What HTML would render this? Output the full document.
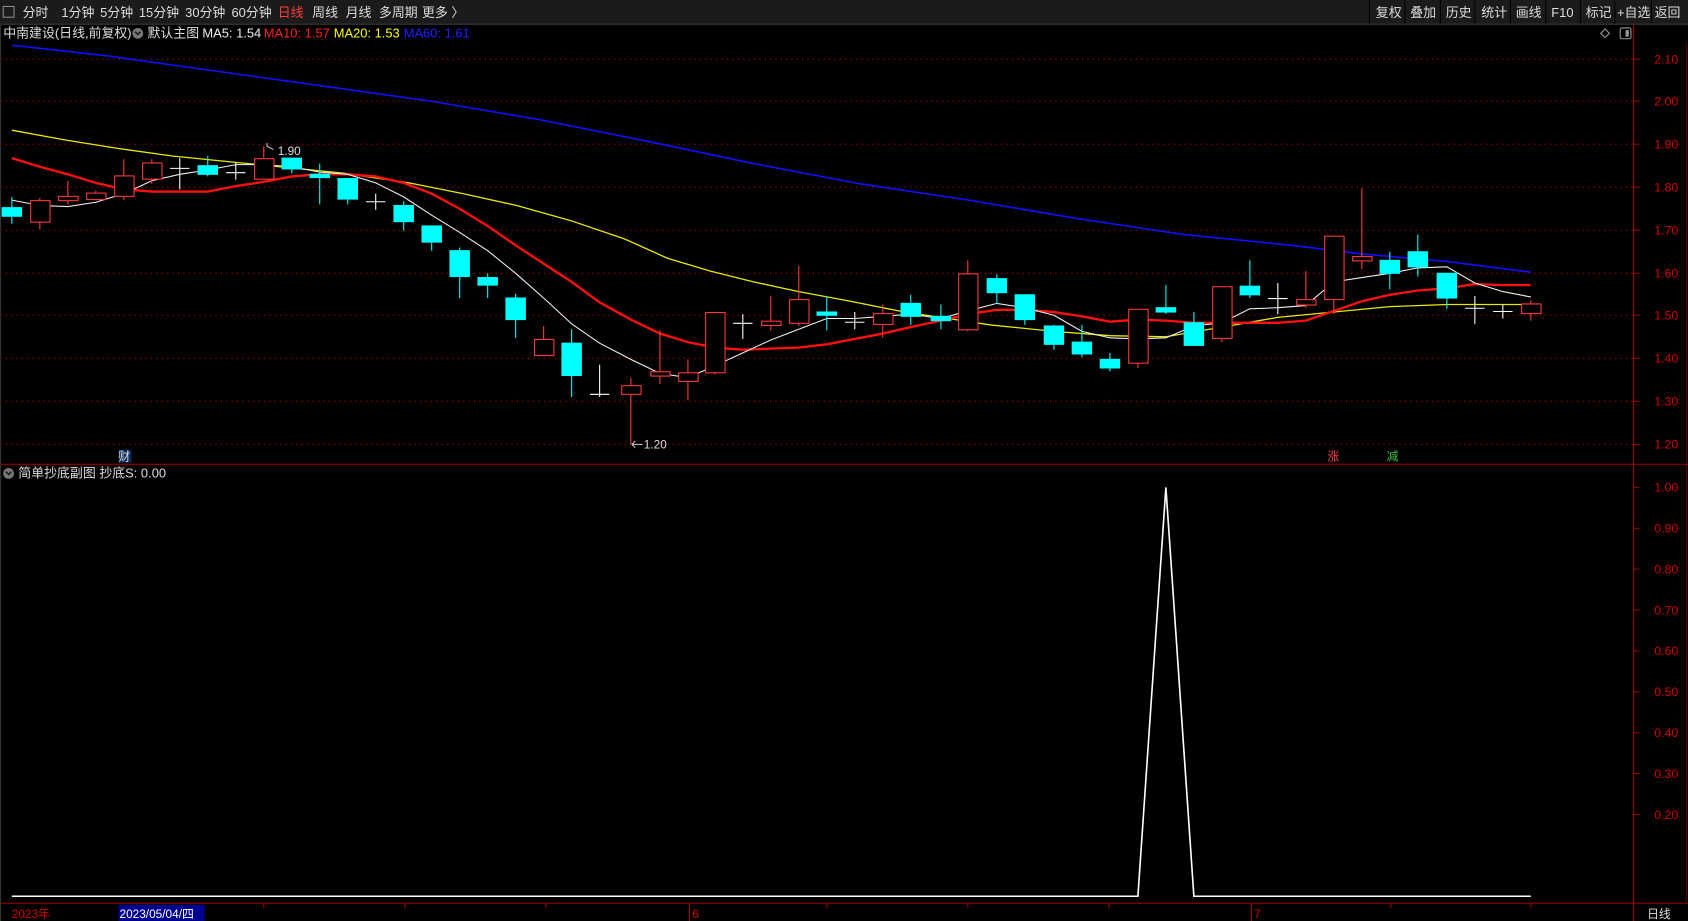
<!DOCTYPE html>
<html><head><meta charset="utf-8"><style>
html,body{margin:0;padding:0;background:#000;width:1688px;height:921px;overflow:hidden}
svg{display:block}
text{font-family:"Liberation Sans","Noto Sans CJK SC",sans-serif}
</style></head><body>
<svg width="1688" height="921" viewBox="0 0 1568 856" preserveAspectRatio="none" xmlns="http://www.w3.org/2000/svg">
<rect width="1568" height="856" fill="#000"/>
<!-- toolbar -->
<rect x="0" y="0" width="1568" height="22" fill="#1b1b1c"/>
<line x1="0" y1="22.5" x2="1568" y2="22.5" stroke="#3a3a3a"/>
<rect x="3" y="6" width="10" height="10" fill="none" stroke="#888"/>
<g font-size="12" fill="#ddd">
<text x="21" y="16">分时</text><text x="57" y="16">1分钟</text><text x="93" y="16">5分钟</text><text x="129" y="16">15分钟</text><text x="172" y="16">30分钟</text><text x="215" y="16">60分钟</text>
<text x="258" y="16" fill="#ff3b3b">日线</text><text x="290" y="16">周线</text><text x="321" y="16">月线</text><text x="352" y="16">多周期</text><text x="392" y="16">更多 〉</text>
<text x="1278" y="16">复权</text><text x="1310" y="16">叠加</text><text x="1343" y="16">历史</text><text x="1376" y="16">统计</text><text x="1408" y="16">画线</text><text x="1441" y="16">F10</text><text x="1473" y="16">标记</text><text x="1502" y="16">+自选</text><text x="1537" y="16">返回</text>
</g>
<g stroke="#000" stroke-width="1">
<line x1="1272" y1="0" x2="1272" y2="22"/><line x1="1305" y1="0" x2="1305" y2="22"/><line x1="1338" y1="0" x2="1338" y2="22"/><line x1="1370" y1="0" x2="1370" y2="22"/><line x1="1403" y1="0" x2="1403" y2="22"/><line x1="1436" y1="0" x2="1436" y2="22"/><line x1="1468" y1="0" x2="1468" y2="22"/><line x1="1500" y1="0" x2="1500" y2="22"/><line x1="1534" y1="0" x2="1534" y2="22"/>
</g>
<!-- info line -->
<g font-size="12">
<text x="3" y="35" fill="#ddd">中南建设(日线,前复权)</text>
<circle cx="128" cy="31" r="5" fill="#777"/><path d="M125.5 29.5 L128 32 L130.5 29.5" stroke="#111" fill="none" stroke-width="1.3"/>
<text x="137" y="35" fill="#ddd">默认主图</text>
<text x="188" y="35" fill="#eee">MA5: 1.54</text>
<text x="245" y="35" fill="#ff2020">MA10: 1.57</text>
<text x="310" y="35" fill="#ffff00">MA20: 1.53</text>
<text x="375" y="35" fill="#2020ff">MA60: 1.61</text>
</g>
<path d="M1491 27 L1495 31 L1491 35 L1487 31 Z" fill="none" stroke="#999"/>
<rect x="1505" y="26" width="10" height="10" rx="1.5" fill="none" stroke="#999"/><rect x="1510" y="28" width="3" height="6" fill="#999"/>
<!-- axes -->
<line x1="1517.5" y1="23" x2="1517.5" y2="856" stroke="#a00000"/>
<line x1="1566.5" y1="40" x2="1566.5" y2="838" stroke="#5a0000"/>
<line x1="0" y1="431.5" x2="1568" y2="431.5" stroke="#a00000"/>
<line x1="0" y1="839.5" x2="1568" y2="839.5" stroke="#a00000"/>
<line x1="0.5" y1="23" x2="0.5" y2="856" stroke="#333"/>
<g stroke="#8a0000" stroke-dasharray="1.5 3.5">
<line x1="0" y1="55" x2="1517" y2="55"/><line x1="0" y1="94" x2="1517" y2="94"/><line x1="0" y1="134" x2="1517" y2="134"/><line x1="0" y1="174" x2="1517" y2="174"/><line x1="0" y1="214" x2="1517" y2="214"/><line x1="0" y1="254" x2="1517" y2="254"/><line x1="0" y1="293" x2="1517" y2="293"/><line x1="0" y1="333" x2="1517" y2="333"/><line x1="0" y1="373" x2="1517" y2="373"/><line x1="0" y1="413" x2="1517" y2="413"/>
</g>
<g stroke="#a00000">
<line x1="1517" y1="55" x2="1523" y2="55"/><line x1="1517" y1="94" x2="1523" y2="94"/><line x1="1517" y1="134" x2="1523" y2="134"/><line x1="1517" y1="174" x2="1523" y2="174"/><line x1="1517" y1="214" x2="1523" y2="214"/><line x1="1517" y1="254" x2="1523" y2="254"/><line x1="1517" y1="293" x2="1523" y2="293"/><line x1="1517" y1="333" x2="1523" y2="333"/><line x1="1517" y1="373" x2="1523" y2="373"/><line x1="1517" y1="413" x2="1523" y2="413"/>
<line x1="1517" y1="453" x2="1523" y2="453"/><line x1="1517" y1="491" x2="1523" y2="491"/><line x1="1517" y1="529" x2="1523" y2="529"/><line x1="1517" y1="567" x2="1523" y2="567"/><line x1="1517" y1="605" x2="1523" y2="605"/><line x1="1517" y1="643" x2="1523" y2="643"/><line x1="1517" y1="681" x2="1523" y2="681"/><line x1="1517" y1="719" x2="1523" y2="719"/><line x1="1517" y1="757" x2="1523" y2="757"/>
</g>
<g font-size="11.5" fill="#d00000" text-anchor="end">
<text x="1559" y="59">2.10</text><text x="1559" y="98">2.00</text><text x="1559" y="138">1.90</text><text x="1559" y="178">1.80</text><text x="1559" y="218">1.70</text><text x="1559" y="258">1.60</text><text x="1559" y="297">1.50</text><text x="1559" y="337">1.40</text><text x="1559" y="377">1.30</text><text x="1559" y="417">1.20</text>
<text x="1559" y="457">1.00</text><text x="1559" y="495">0.90</text><text x="1559" y="533">0.80</text><text x="1559" y="571">0.70</text><text x="1559" y="609">0.60</text><text x="1559" y="647">0.50</text><text x="1559" y="685">0.40</text><text x="1559" y="723">0.30</text><text x="1559" y="761">0.20</text>
</g>
<!-- MA lines -->
<polyline fill="none" stroke="#1010ff" stroke-width="1.5" points="11,42 100,52 200,66 300,80 400,94 500,111 600,131 700,152 800,171 900,186 1000,203 1100,218 1200,228 1265,236 1344,243 1422,253"/>
<polyline fill="none" stroke="#e8e800" stroke-width="1.2" points="11,121 60,130 110,138 160,145 220,151 270,156 320,161 380,170 430,180 480,191 530,205 580,222 620,240 660,252 700,262 742,271 790,280 840,290 874,295 920,302 979,308 1031,312 1083,313 1135,304 1187,295 1239,290 1291,285 1344,283 1422,283"/>
<polyline fill="none" stroke="#ff1010" stroke-width="2.2" points="11,147 37,155 63,162 89,170 115,176 141,178 167,178 193,178 219,173 245,169 271,164 297,162 323,162 349,164 375,170 401,180 427,194 453,210 479,228 505,245 531,262 557,281 586,297 613,310 639,318 664,323 690,325 716,324 742,323 768,320 794,315 820,310 846,304 874,298 899,292 926,288 952,288 979,290 1005,294 1031,299 1057,297 1083,298 1109,300 1135,300 1161,300 1187,300 1213,298 1239,289 1265,280 1291,274 1317,270 1344,268 1370,264 1396,265 1422,265"/>
<polyline fill="none" stroke="#f0f0f0" stroke-width="1" points="11,186 37,191 63,192 89,188 115,180 141,168 167,162 193,158 219,153 245,153 271,155 297,160 323,162 349,170 375,183 401,200 427,216 453,233 479,254 505,277 531,301 557,319 586,334 613,347 639,351 664,340 690,328 716,316 742,306 768,296 794,296 820,294 846,292 874,296 899,289 926,282 952,286 979,293 1005,308 1031,314 1057,315 1083,314 1109,303 1135,300 1161,287 1187,286 1213,284 1239,262 1265,258 1291,254 1317,249 1344,248 1370,263 1396,271 1422,276"/>
<!-- candles: red -->
<g stroke="#ff3a3a" fill="#000" stroke-width="1">
<line x1="37" y1="184" x2="37" y2="213"/><rect x="28.5" y="186.5" width="18" height="20"/>
<line x1="63" y1="168" x2="63" y2="190"/><rect x="54.5" y="182.5" width="18" height="4"/>
<line x1="89" y1="177" x2="89" y2="186"/><rect x="80.5" y="179.5" width="18" height="6"/>
<line x1="115" y1="148" x2="115" y2="186"/><rect x="106.5" y="163.5" width="18" height="19"/>
<line x1="141" y1="148" x2="141" y2="171"/><rect x="132.5" y="151.5" width="18" height="15"/>
<line x1="245" y1="136" x2="245" y2="166"/><rect x="236.5" y="147.5" width="18" height="19"/>
<line x1="505" y1="303" x2="505" y2="330"/><rect x="496.5" y="315.5" width="18" height="15"/>
<line x1="586" y1="351" x2="586" y2="413"/><rect x="577.5" y="358.5" width="18" height="8"/>
<line x1="613" y1="307" x2="613" y2="357"/><rect x="604.5" y="345.5" width="18" height="4"/>
<line x1="639" y1="334" x2="639" y2="372"/><rect x="630.5" y="346.5" width="18" height="8"/>
<line x1="664" y1="290" x2="664" y2="348"/><rect x="655.5" y="290.5" width="18" height="56"/>
<line x1="716" y1="275" x2="716" y2="307"/><rect x="707.5" y="298.5" width="18" height="4"/>
<line x1="742" y1="247" x2="742" y2="303"/><rect x="733.5" y="278.5" width="18" height="22"/>
<line x1="820" y1="283" x2="820" y2="314"/><rect x="811.5" y="291.5" width="18" height="10"/>
<line x1="899" y1="242" x2="899" y2="308"/><rect x="890.5" y="254.5" width="18" height="52"/>
<line x1="1057" y1="287" x2="1057" y2="342"/><rect x="1048.5" y="287.5" width="18" height="50"/>
<line x1="1135" y1="266" x2="1135" y2="318"/><rect x="1126.5" y="266.5" width="18" height="48"/>
<line x1="1213" y1="252" x2="1213" y2="286"/><rect x="1204.5" y="278.5" width="18" height="5"/>
<line x1="1239" y1="219" x2="1239" y2="292"/><rect x="1230.5" y="219.5" width="18" height="59"/>
<line x1="1265" y1="175" x2="1265" y2="250"/><rect x="1256.5" y="238.5" width="18" height="4"/>
<line x1="1422" y1="279" x2="1422" y2="298"/><rect x="1413.5" y="282.5" width="18" height="9"/>
</g>
<!-- cyan -->
<g stroke="#00ffff" fill="#00ffff">
<line x1="11" y1="183" x2="11" y2="208"/><rect x="2" y="193" width="18" height="8"/>
<line x1="193" y1="145" x2="193" y2="164"/><rect x="184" y="154" width="18" height="8"/>
<line x1="271" y1="147" x2="271" y2="161"/><rect x="262" y="147" width="18" height="10"/>
<line x1="297" y1="152" x2="297" y2="190"/><rect x="288" y="162" width="18" height="3"/>
<line x1="323" y1="166" x2="323" y2="190"/><rect x="314" y="166" width="18" height="19"/>
<line x1="375" y1="187" x2="375" y2="214"/><rect x="366" y="191" width="18" height="15"/>
<line x1="401" y1="210" x2="401" y2="233"/><rect x="392" y="210" width="18" height="15"/>
<line x1="427" y1="230" x2="427" y2="277"/><rect x="418" y="233" width="18" height="24"/>
<line x1="453" y1="254" x2="453" y2="277"/><rect x="444" y="258" width="18" height="7"/>
<line x1="479" y1="273" x2="479" y2="314"/><rect x="470" y="277" width="18" height="20"/>
<line x1="531" y1="306" x2="531" y2="369"/><rect x="522" y="319" width="18" height="30"/>
<line x1="768" y1="275" x2="768" y2="307"/><rect x="759" y="290" width="18" height="3"/>
<line x1="846" y1="274" x2="846" y2="302"/><rect x="837" y="282" width="18" height="12"/>
<line x1="874" y1="283" x2="874" y2="306"/><rect x="865" y="294" width="18" height="4"/>
<line x1="926" y1="255" x2="926" y2="282"/><rect x="917" y="259" width="18" height="13"/>
<line x1="952" y1="274" x2="952" y2="302"/><rect x="943" y="274" width="18" height="23"/>
<line x1="979" y1="302" x2="979" y2="325"/><rect x="970" y="303" width="18" height="17"/>
<line x1="1005" y1="302" x2="1005" y2="332"/><rect x="996" y="318" width="18" height="11"/>
<line x1="1031" y1="328" x2="1031" y2="345"/><rect x="1022" y="334" width="18" height="8"/>
<line x1="1083" y1="265" x2="1083" y2="292"/><rect x="1074" y="286" width="18" height="4"/>
<line x1="1109" y1="290" x2="1109" y2="321"/><rect x="1100" y="300" width="18" height="21"/>
<line x1="1161" y1="242" x2="1161" y2="277"/><rect x="1152" y="266" width="18" height="8"/>
<line x1="1291" y1="234" x2="1291" y2="269"/><rect x="1282" y="242" width="18" height="12"/>
<line x1="1317" y1="218" x2="1317" y2="257"/><rect x="1308" y="234" width="18" height="14"/>
<line x1="1344" y1="254" x2="1344" y2="287"/><rect x="1335" y="254" width="18" height="23"/>
</g>
<!-- crosses -->
<g stroke="#fff">
<line x1="167" y1="147" x2="167" y2="176"/><line x1="158" y1="156.5" x2="176" y2="156.5"/>
<line x1="219" y1="151" x2="219" y2="167"/><line x1="210" y1="160.5" x2="228" y2="160.5"/>
<line x1="349" y1="180" x2="349" y2="195"/><line x1="340" y1="187.5" x2="358" y2="187.5"/>
<line x1="557" y1="339" x2="557" y2="369"/><line x1="548" y1="366.5" x2="566" y2="366.5"/>
<line x1="690" y1="292" x2="690" y2="315"/><line x1="681" y1="300.5" x2="699" y2="300.5"/>
<line x1="794" y1="290" x2="794" y2="306"/><line x1="785" y1="299.5" x2="803" y2="299.5"/>
<line x1="1187" y1="263" x2="1187" y2="292"/><line x1="1178" y1="277.5" x2="1196" y2="277.5"/>
<line x1="1370" y1="275" x2="1370" y2="301"/><line x1="1361" y1="286.5" x2="1379" y2="286.5"/>
<line x1="1396" y1="283" x2="1396" y2="296"/><line x1="1387" y1="289.5" x2="1405" y2="289.5"/>
</g>
<!-- annotations -->
<g font-size="11" fill="#ddd">
<path d="M248 136 L254 139 M248 136 L248 133" stroke="#ccc" fill="none"/>
<text x="258" y="144">1.90</text>
<path d="M587 413 L597 413 M587 413 L590 410 M587 413 L590 416" stroke="#ccc" fill="none"/>
<text x="598" y="417">1.20</text>
</g>
<rect x="110" y="418" width="12" height="12" fill="#0a2a5a"/>
<g font-size="11">
<text x="110" y="428" fill="#ddd">财</text>
<text x="1233" y="428" fill="#ff4040">涨</text>
<text x="1288" y="428" fill="#40c040">减</text>
</g>
<!-- sub header -->
<circle cx="8" cy="440" r="5" fill="#777"/><path d="M5.5 438.5 L8 441 L10.5 438.5" stroke="#111" fill="none" stroke-width="1.3"/>
<text x="17" y="444" font-size="12" fill="#ddd">简单抄底副图  抄底S: 0.00</text>
<!-- sub line -->
<polyline fill="none" stroke="#fff" stroke-width="1.5" points="11,833 1057,833 1083,453 1109,833 1422,833"/>
<!-- date axis -->
<g stroke="#a00000">
<line x1="640.5" y1="840" x2="640.5" y2="856"/><line x1="1162.5" y1="840" x2="1162.5" y2="856"/>
<line x1="245" y1="840" x2="245" y2="844"/><line x1="376" y1="840" x2="376" y2="844"/><line x1="507" y1="840" x2="507" y2="844"/><line x1="768" y1="840" x2="768" y2="844"/><line x1="899" y1="840" x2="899" y2="844"/><line x1="1030" y1="840" x2="1030" y2="844"/><line x1="1292" y1="840" x2="1292" y2="844"/><line x1="1422" y1="840" x2="1422" y2="844"/>
</g>
<g font-size="11">
<text x="11" y="853" fill="#d00000">2023年</text>
<rect x="110" y="841" width="80" height="15" fill="#000090"/>
<text x="111" y="853" fill="#fff">2023/05/04/四</text>
<text x="643" y="853" fill="#d00000">6</text>
<text x="1165" y="853" fill="#d00000">7</text>
<text x="1530" y="853" fill="#ddd">日线</text>
</g>
</svg>
</body></html>
